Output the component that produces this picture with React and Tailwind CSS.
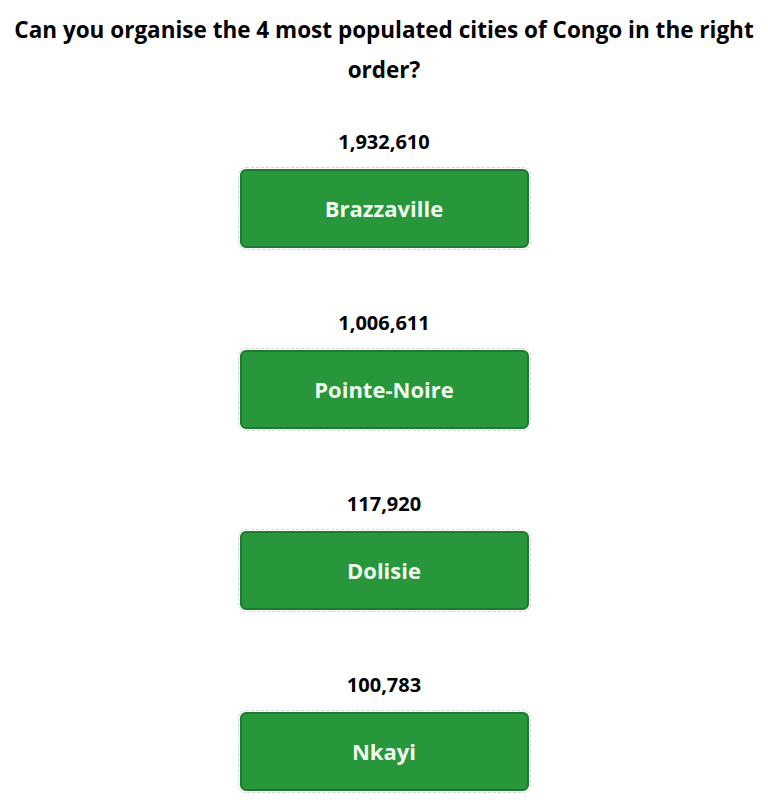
import React from 'react';

const cities = [
  { name: 'Brazzaville', pop: '1,932,610' },
  { name: 'Pointe-Noire', pop: '1,006,611' },
  { name: 'Dolisie', pop: '117,920' },
  { name: 'Nkayi', pop: '100,783' },
];

export default function App() {
  return (
    <div className="bg-white text-black pt-[10px] font-['Open_Sans',sans-serif]">
      <h1 className="text-center text-[22.5px] font-bold leading-10 px-2">
        Can you organise the 4 most populated cities of Congo in the right order?
      </h1>
      <div className="flex flex-col items-center gap-[61px] mt-10">
        {cities.map((c) => (
          <div key={c.name} className="flex flex-col items-center">
            <div className="text-[20px] font-bold leading-6">{c.pop}</div>
            <div className="mt-[13px] w-[293px] h-[83px] p-px border border-dashed border-gray-300 rounded-lg">
              <div className="w-full h-full flex items-center justify-center bg-[#28963a] border-2 border-[#1d7a2e] rounded-md text-[22px] font-bold text-[#eefbee]">
                {c.name}
              </div>
            </div>
          </div>
        ))}
      </div>
    </div>
  );
}
